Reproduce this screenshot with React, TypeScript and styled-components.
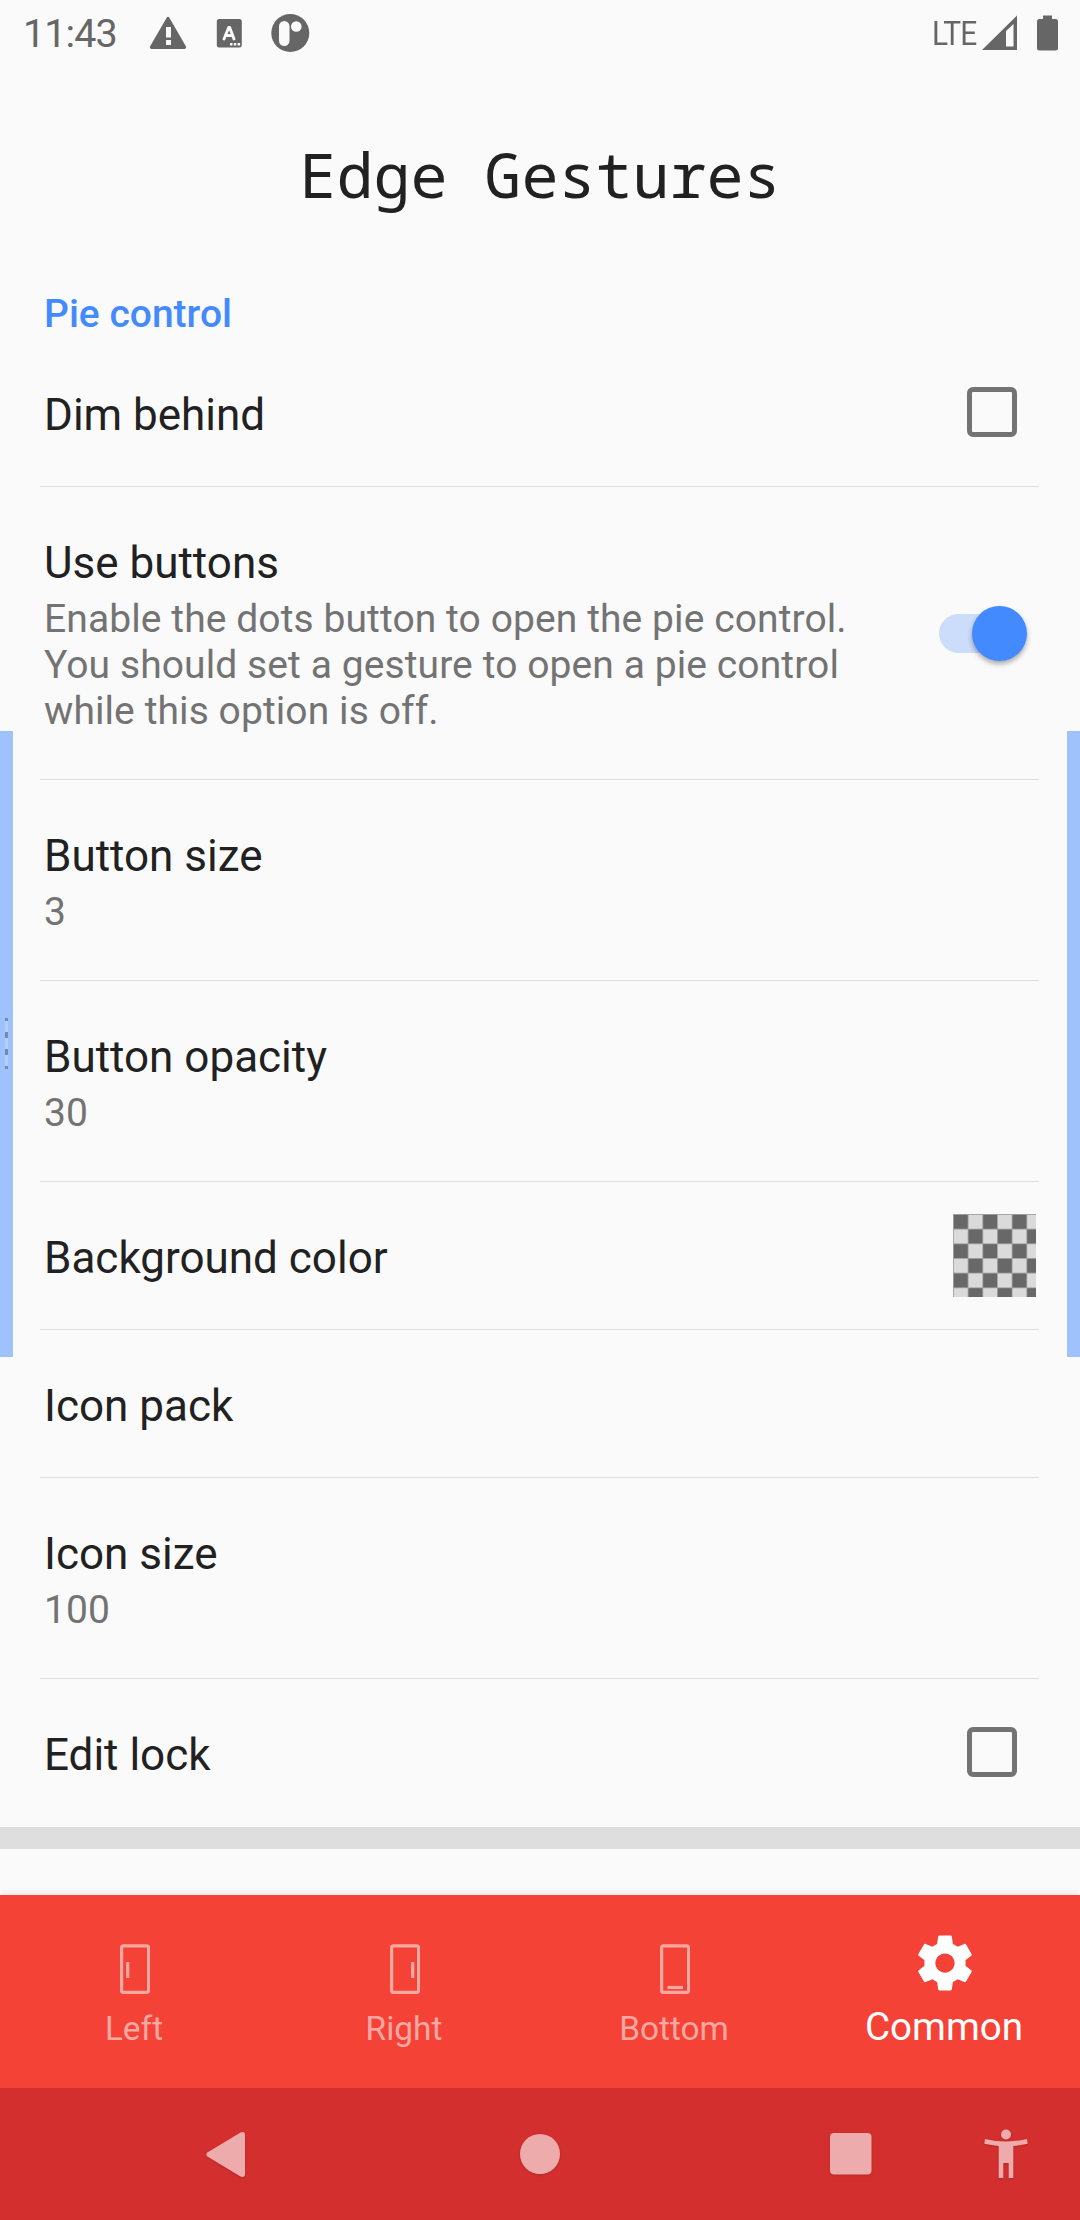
import React from "react";
import styled, { createGlobalStyle } from "styled-components";

const GlobalStyle = createGlobalStyle`
  * { box-sizing: border-box; }
  body { margin: 0; background: #fafafa; }
`;

const Screen = styled.div`
  position: relative;
  display: flex;
  flex-direction: column;
  width: 1080px;
  height: 2220px;
  overflow: hidden;
  background: #fafafa;
  color: #212121;
  font-family: Roboto, sans-serif;
`;

const StatusBar = styled.header`
  display: flex;
  align-items: center;
  flex: none;
  height: 66px;
  padding: 0 20px 0 23px;
  color: #666;
`;

const Clock = styled.span`
  width: 97px;
  margin-right: 27px;
  padding-top: 2px;
  font-size: 39.5px;
  line-height: 66px;
  letter-spacing: -0.9px;
`;

const Notices = styled.div`
  display: flex;
  align-items: center;
  flex: 1;
`;

const Network = styled.span`
  margin-right: 6px;
  font-size: 34px;
  line-height: 66px;
  letter-spacing: -1px;
  transform: scaleX(0.88);
  transform-origin: right center;
`;

const Title = styled.h1`
  flex: none;
  margin: 0;
  height: 217px;
  text-align: center;
  font: 400 61.7px/217px "Noto Sans Mono", "DejaVu Sans Mono", monospace;
`;

const SectionTitle = styled.h2`
  flex: none;
  margin: 0;
  height: 56px;
  padding: 8px 44px 0;
  font-size: 39px;
  line-height: 46px;
  font-weight: 500;
  color: #448aff;
`;

const List = styled.main`
  display: flex;
  flex-direction: column;
`;

const Row = styled.section<{ $last?: boolean }>`
  display: flex;
  align-items: center;
  justify-content: space-between;
  margin: 0 41px 0 40px;
  padding-left: 4px;
  border-bottom: 1px solid ${(p) => (p.$last ? "transparent" : "#dedede")};
`;

const RowText = styled.div`
  padding: 50px 0 45px;
`;

const RowTitle = styled.div`
  font-size: 44px;
  line-height: 52px;
  white-space: nowrap;
`;

const RowSummary = styled.div`
  padding-top: 7px;
  font-size: 39px;
  line-height: 46px;
  letter-spacing: 0.09px;
  color: #737373;
  white-space: pre-line;
`;

const Checkbox = styled.div`
  width: 50px;
  height: 50px;
  margin: 0 22px 1px 0;
  border: 5.5px solid #737373;
  border-radius: 6px;
`;

const SwitchTrack = styled.div`
  display: flex;
  align-items: center;
  justify-content: flex-end;
  width: 76px;
  height: 39px;
  margin: 0 24px 0 0;
  border-radius: 20px;
  background: #cbddfb;
`;

const SwitchThumb = styled.div`
  flex: none;
  width: 55px;
  height: 55px;
  margin-right: -12px;
  border-radius: 50%;
  background: #448aff;
  box-shadow: 0 3px 5px rgba(0, 0, 0, 0.32);
`;

const SwatchArt = styled.svg`
  display: block;
  margin-right: 3px;
`;

const SectionGap = styled.div`
  flex: none;
  height: 22px;
  background: #dedede;
`;

const EdgeZone = styled.div<{ $side: "left" | "right" }>`
  position: absolute;
  top: 731px;
  ${(p) => p.$side}: 0;
  width: 13px;
  height: 626px;
  background: #9fc1fc;
`;

const EdgeHandle = styled.svg`
  position: absolute;
  left: 5px;
  top: 287px;
`;

const TabBar = styled.nav`
  display: grid;
  grid-template-columns: repeat(4, 1fr);
  flex: none;
  height: 193px;
  margin-top: auto;
  background: #f44336;
  box-shadow: 0 0 8px rgba(0, 0, 0, 0.12);
`;

const Tab = styled.div<{ $active?: boolean }>`
  display: flex;
  flex-direction: column;
  align-items: center;
  padding-top: ${(p) => (p.$active ? 35 : 41)}px;
  color: ${(p) => (p.$active ? "#fff" : "#fba8a2")};
  font-size: ${(p) => (p.$active ? 38.6 : 33.4)}px;
  line-height: 46px;
`;

const TabLabel = styled.span<{ $active?: boolean }>`
  margin-top: ${(p) => (p.$active ? 8 : 4)}px;
  padding-right: 2px;
`;

const TabIcon = styled.svg`
  display: block;
  flex: none;
`;

const SystemBar = styled.footer`
  display: flex;
  align-items: center;
  flex: none;
  height: 132px;
  padding-left: 204px;
  background: #d32f2f;
`;

const NavIcon = styled.svg<{ $gap: number }>`
  flex: none;
  margin-right: ${(p) => p.$gap}px;
  overflow: visible;
  filter: drop-shadow(0 1.5px 1px rgba(0, 0, 0, 0.15));
`;

function Swatch() {
  const pitch = 14.667;
  const cells = [];
  for (let r = 0; r < 6; r++) {
    for (let c = 0; c < 6; c++) {
      cells.push(
        <rect
          key={`${r}-${c}`}
          x={c * pitch + 0.9}
          y={r * pitch + 0.9}
          width={pitch - 0.9}
          height={pitch - 0.9}
          fill={(r + c) % 2 ? "#dadada" : "#686868"}
        />
      );
    }
  }
  return (
    <SwatchArt width="83" height="83" viewBox="0 0 83 83">
      <rect width="83" height="83" fill="#a2a2a2" />
      {cells}
    </SwatchArt>
  );
}

function EdgeIcon({ edge }: { edge: "left" | "right" | "bottom" }) {
  const marks = {
    left: "M7.7 18v16",
    right: "M22.7 18v16",
    bottom: "M7.5 43.5h15.5",
  };
  return (
    <TabIcon width="30" height="66" viewBox="0 -8 30 66" fill="none" stroke="currentColor" strokeWidth="3.2">
      <rect x="1.6" y="1.8" width="27" height="46.6" rx="2" />
      <path d={marks[edge]} />
    </TabIcon>
  );
}

type Item = { title: string; summary?: string; control?: React.ReactNode };

const items: Item[] = [
  { title: "Dim behind", control: <Checkbox /> },
  {
    title: "Use buttons",
    summary:
      "Enable the dots button to open the pie control.\nYou should set a gesture to open a pie control\nwhile this option is off.",
    control: (
      <SwitchTrack>
        <SwitchThumb />
      </SwitchTrack>
    ),
  },
  { title: "Button size", summary: "3" },
  { title: "Button opacity", summary: "30" },
  { title: "Background color", control: <Swatch /> },
  { title: "Icon pack" },
  { title: "Icon size", summary: "100" },
  { title: "Edit lock", control: <Checkbox /> },
];

export default function App() {
  return (
    <Screen>
      <GlobalStyle />
      <StatusBar>
        <Clock>11:43</Clock>
        <Notices>
          <svg width="41" height="66" viewBox="147 0 41 66" fill="currentColor">
            <path
              fillRule="evenodd"
              d="M166.8 17.5q1.2-1.4 2.4 0L186 46.5q.6 2.4-1.4 2.6h-33.2q-2-.2-1.4-2.6zM166 27v10.5h5V27zM166 40v5h5v-5z"
            />
          </svg>
          <svg width="83" height="66" viewBox="188 0 83 66" fill="none">
            <rect x="216.8" y="19" width="25" height="28.5" rx="2.5" fill="#666" />
            <path d="M224 39l4.7-11.5h1L234 39M225.800 35.500h6.600" stroke="#fafafa" strokeWidth="2.9" strokeLinecap="round" strokeLinejoin="round" />
            <path d="M230 43h2.500v2.500H230zM233.800 43h2.500v2.500h-2.500zM237.600 43h2.500v2.500h-2.500z" fill="#fafafa" />
          </svg>
          <svg width="40" height="66" viewBox="271 0 40 66">
            <circle cx="290.3" cy="33" r="19" fill="#666" />
            <rect x="279" y="21" width="10.5" height="25" rx="5.25" fill="#fafafa" />
            <circle cx="296.3" cy="26.5" r="5.3" fill="#fafafa" />
          </svg>
        </Notices>
        <Network>LTE</Network>
        <svg width="35" height="66" viewBox="982 0 35 66" fill="#666">
          <path fillRule="evenodd" d="M982 50L1017 15.500V50zM1006 31v15.500h7.500V24z" />
        </svg>
        <svg width="43" height="66" viewBox="1017 0 43 66" fill="#666">
          <path d="M1043 15.500h9V19h3.500q2.500 0 2.500 2.500V48q0 2.500-2.500 2.500h-16q-2.500 0-2.500-2.500V21.500q0-2.500 2.500-2.500h3.500z" />
        </svg>
      </StatusBar>
      <Title>Edge Gestures</Title>
      <SectionTitle>Pie control</SectionTitle>
      <List>
        {items.map((item, i) => (
          <Row key={item.title} $last={i === items.length - 1}>
            <RowText>
              <RowTitle>{item.title}</RowTitle>
              {item.summary && <RowSummary>{item.summary}</RowSummary>}
            </RowText>
            {item.control}
          </Row>
        ))}
      </List>
      <SectionGap />
      <TabBar>
        <Tab>
          <EdgeIcon edge="left" />
          <TabLabel>Left</TabLabel>
        </Tab>
        <Tab>
          <EdgeIcon edge="right" />
          <TabLabel>Right</TabLabel>
        </Tab>
        <Tab>
          <EdgeIcon edge="bottom" />
          <TabLabel>Bottom</TabLabel>
        </Tab>
        <Tab $active>
          <TabIcon width="66" height="66" viewBox="0 0 24 24" fill="currentColor">
            <path d="M19.43 12.98c.04-.32.07-.64.07-.98s-.03-.66-.07-.98l2.110-1.650c.19-.15.24-.42.12-.64l-2-3.460c-.12-.22-.39-.3-.61-.22l-2.490 1c-.52-.4-1.080-.73-1.690-.98l-.38-2.650C14.460 2.180 14.250 2 14 2h-4c-.25 0-.46.18-.49.42l-.38 2.650c-.61.25-1.170.59-1.690.98l-2.490-1c-.23-.09-.49 0-.61.22l-2 3.460c-.13.22-.07.49.12.64l2.110 1.650c-.04.32-.07.65-.07.98s.03.66.07.98l-2.110 1.650c-.19.15-.24.42-.12.64l2 3.460c.12.22.39.3.61.22l2.490-1c.52.4 1.080.73 1.690.98l.38 2.650c.03.24.24.42.49.42h4c.25 0 .46-.18.49-.42l.38-2.650c.61-.25 1.170-.59 1.690-.98l2.490 1c.23.09.49 0 .61-.22l2-3.460c.12-.22.07-.49-.12-.64l-2.110-1.650zM12 15.500c-1.930 0-3.500-1.570-3.500-3.500s1.570-3.500 3.500-3.500 3.500 1.570 3.500 3.500-1.570 3.500-3.500 3.500z" />
          </TabIcon>
          <TabLabel $active>Common</TabLabel>
        </Tab>
      </TabBar>
      <SystemBar>
        <NavIcon $gap={274} width="42" height="48" viewBox="204 2130 42 48" fill="#edabab">
          <path d="M207.300 2152.500L240.500 2132.500q4.500-1.500 4.500 2.500v39q0 4-4.500 2.500L207.300 2156.500q-2-2 0-4z" />
        </NavIcon>
        <NavIcon $gap={270} width="40" height="40" viewBox="0 0 40 40" fill="#edabab">
          <circle cx="20" cy="20" r="20" />
        </NavIcon>
        <NavIcon $gap={112} width="42" height="42" viewBox="0 0 42 42" fill="#edabab">
          <rect width="41.5" height="41.5" rx="4" />
        </NavIcon>
        <NavIcon $gap={0} width="44" height="50" viewBox="984 2129.5 44 50" fill="#edabab">
          <circle cx="1006" cy="2135" r="5" />
          <path d="M985 2139.500q21 5 42 0l.7 4.800q-7 1.500-14.400 2.200v32h-4.600v-15h-5.400v15h-4.600v-32q-7.400-.7-14.400-2.200z" />
        </NavIcon>
      </SystemBar>
      <EdgeZone $side="left">
        <EdgeHandle width="3" height="51" viewBox="0 0 3 51">
          <rect width="3" height="51" fill="#b5cffc" />
          <path d="M0 0h3v3H0zM0 14h3v6H0zM0 31h3v6H0zM0 48h3v3H0z" fill="#708bb6" />
        </EdgeHandle>
      </EdgeZone>
      <EdgeZone $side="right" />
    </Screen>
  );
}
